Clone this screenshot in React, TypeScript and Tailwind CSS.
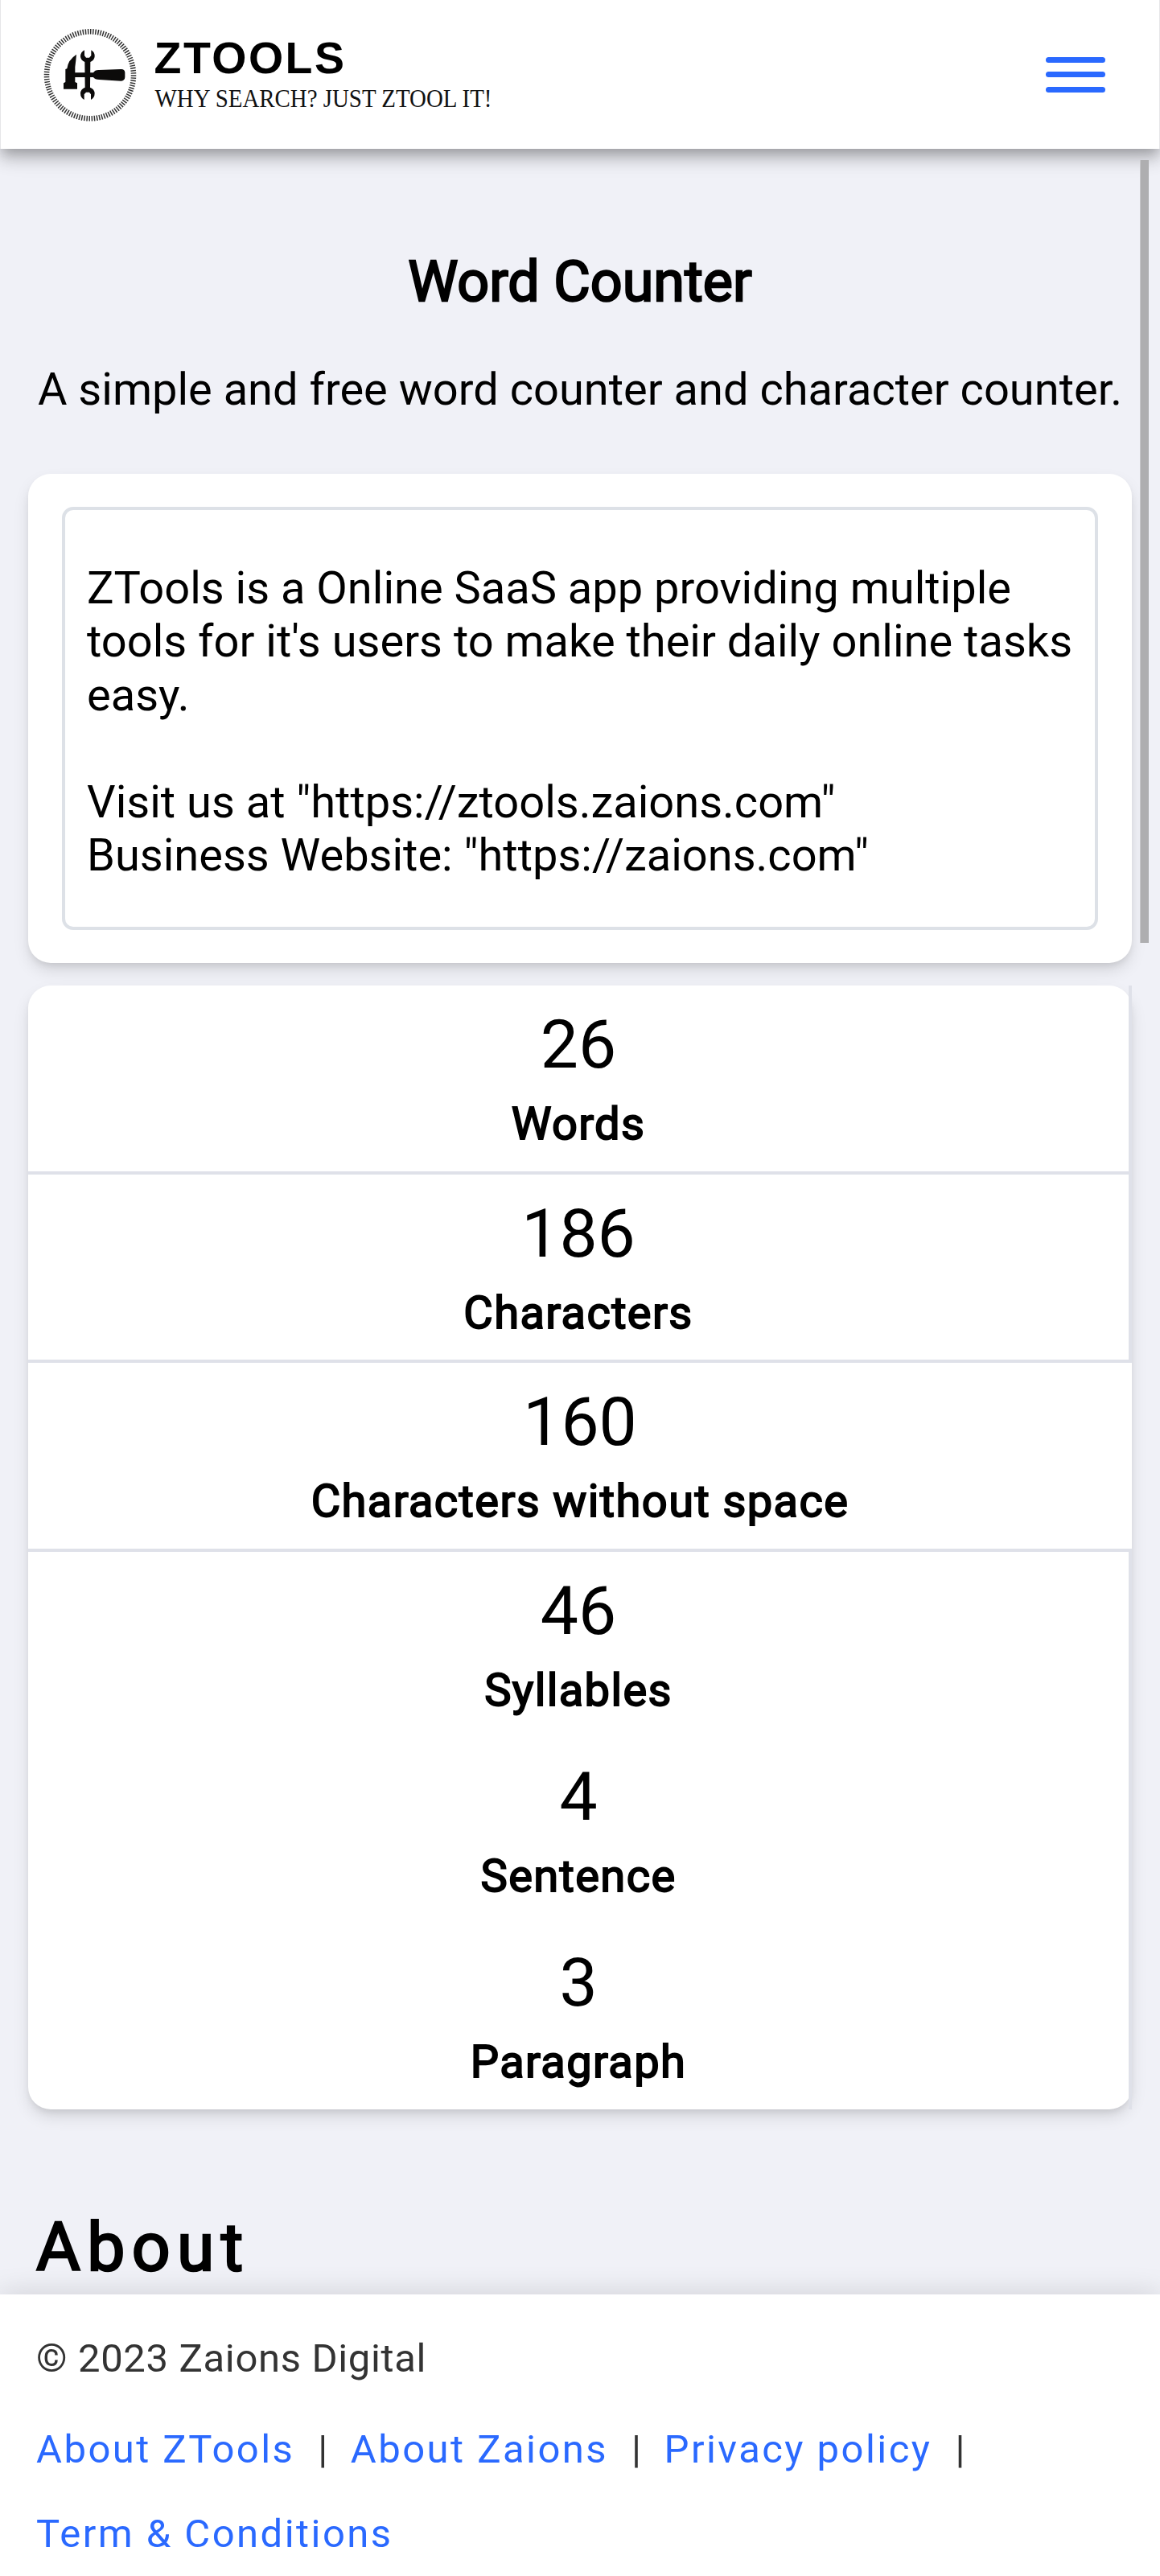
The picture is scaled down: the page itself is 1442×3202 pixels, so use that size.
import React from "react";

const SAMPLE_TEXT = `ZTools is a Online SaaS app providing multiple tools for it's users to make their daily online tasks easy.

Visit us at "https://ztools.zaions.com"
Business Website: "https://zaions.com"`;

const STATS = [
  { value: "26", label: "Words", bottom: true, right: true },
  { value: "186", label: "Characters", bottom: true, right: true },
  { value: "160", label: "Characters without space", bottom: true, right: false },
  { value: "46", label: "Syllables", bottom: false, right: true },
  { value: "4", label: "Sentence", bottom: false, right: true },
  { value: "3", label: "Paragraph", bottom: false, right: true },
];

function Logo() {
  return (
    <svg className="overflow-visible" width="700" height="185" viewBox="0 0 700 185" role="img" aria-label="ZTools">
      <circle
        cx="112"
        cy="93.3"
        r="54"
        fill="none"
        stroke="#333"
        strokeWidth="6.6"
        pathLength="216"
        strokeDasharray="0.95 1.05"
      />
      <g transform="translate(30 20) scale(0.33333)" fill="#0c0b0a">
        {/* hammer */}
        <path d="M195 143 L193 165 L190 190 L190 211 L258 211 Q264 200 280 201 L362 198 Q375 198 376 210 L376 228 Q375 241 362 242 L280 237 Q264 237 258 228 L190 228 L190 246 L198 250 L198 272 L147 272 L147 250 L154 246 L154 198 L160 196 Q163 164 195 143 Z" />
        {/* double-ended wrench */}
        <path d="M225 127 L225 147 L231 155 L243 155 L250 147 L250 127 Q264 135 263 151 Q262 165 247 171 L246 266 Q262 272 263 288 Q263 304 249 312 L249 292 L243 284 L231 284 L224 292 L224 312 Q210 304 210 288 Q211 272 227 266 L226 171 Q211 165 210 151 Q210 135 225 127 Z" />
      </g>
      <text
        x="191.5"
        y="91"
        fill="#000"
        fontFamily="'Liberation Sans', Arial, sans-serif"
        fontWeight="700"
        fontSize="55.5"
        textLength="236.5"
      >
        ZTOOLS
      </text>
      <text
        x="192.5"
        y="132.7"
        fill="#111"
        fontFamily="'Liberation Serif', 'Times New Roman', serif"
        fontSize="31"
        textLength="419"
        lengthAdjust="spacingAndGlyphs"
      >
        WHY SEARCH? JUST ZTOOL IT!
      </text>
    </svg>
  );
}

function Header() {
  return (
    <header className="relative z-10 flex h-[185px] shrink-0 items-center justify-between border-x border-[#e6e6e8] bg-white pr-[67px] shadow-[0_7px_14px_-3.5px_rgba(0,0,0,0.2),0_14px_17.5px_0_rgba(0,0,0,0.14),0_3.5px_35px_0_rgba(0,0,0,0.12)]">
      <div className="-ml-px">
        <Logo />
      </div>
      <button type="button" aria-label="Menu" className="flex w-[74px] flex-col gap-[11.5px]">
        <span className="h-[7px] rounded-full bg-[#2a69ff]" />
        <span className="h-[7px] rounded-full bg-[#2a69ff]" />
        <span className="h-[7px] rounded-full bg-[#2a69ff]" />
      </button>
    </header>
  );
}

function Stat({ value, label, bottom, right }: (typeof STATS)[number]) {
  return (
    <div
      className={`flex flex-col items-center border-[#dfe1e9] pt-[25px] ${
        bottom ? "h-[234.5px] border-b-4" : "h-[231px]"
      } ${right ? "border-r-4" : ""}`}
    >
      <div className="text-[84px] leading-[98px]">{value}</div>
      <div className="mt-[16px] text-[56px] leading-[66px] tracking-[1.4px] [-webkit-text-stroke:1.9px_#000]">
        {label}
      </div>
    </div>
  );
}

function Separator() {
  return <span className="pr-[28.5px] pl-[29px] tracking-normal text-[#333]">|</span>;
}

function Footer() {
  return (
    <footer className="relative z-10 h-[350px] shrink-0 bg-white px-[45px] pt-[51px] text-[49px] text-[#333] shadow-[0_0_35px_0_rgba(0,0,0,0.14)]">
      <p className="leading-[58px] tracking-[0.65px]">© 2023 Zaions Digital</p>
      <nav className="mt-[31px] flex flex-wrap leading-[105px] tracking-[2.45px] text-[#2a69ff]">
        <a>About ZTools</a>
        <Separator />
        <a>About Zaions</a>
        <Separator />
        <a>Privacy policy</a>
        <Separator />
        <a>Term &amp; Conditions</a>
      </nav>
    </footer>
  );
}

export default function App() {
  return (
    <div className="relative flex h-[3202px] w-[1442px] flex-col overflow-hidden bg-[#f0f1f7] font-['Roboto',sans-serif] text-black">
      <Header />
      <main className="flex-1 px-[35px] pt-[123px]">
        <h1 className="text-center text-[70px] leading-[84px] [-webkit-text-stroke:2.3px_#000]">Word Counter</h1>
        <p className="mt-[50px] text-center text-[56px] leading-[84px] whitespace-nowrap">
          A simple and free word counter and character counter.
        </p>

        <section className="mt-[63px] h-[608px] rounded-[28px] bg-white px-[42px] pt-[41px] shadow-[0_10px_21px_-3px_rgba(0,0,0,0.14),0_5px_8px_-2px_rgba(0,0,0,0.08)]">
          <div className="h-[526px] rounded-[14px] border-4 border-[#dde1e7] px-[27px] pt-[63.5px] text-[56px] leading-[66.5px] whitespace-pre-wrap">
            {SAMPLE_TEXT}
          </div>
        </section>

        <section className="mt-[28px] rounded-[28px] bg-white shadow-[0_10px_21px_-3px_rgba(0,0,0,0.14),0_5px_8px_-2px_rgba(0,0,0,0.08)]">
          {STATS.map((stat) => (
            <Stat key={stat.label} {...stat} />
          ))}
        </section>

        <h2 className="mt-[122px] pl-[10px] text-[84px] leading-[100px] tracking-[8.4px] [-webkit-text-stroke:2.6px_#000]">
          About
        </h2>
      </main>
      <Footer />
      <div className="absolute top-[199px] right-[14px] z-20 h-[973px] w-[11px] border-l border-[#c6c6ca] bg-[#aeaeb0]" />
    </div>
  );
}
